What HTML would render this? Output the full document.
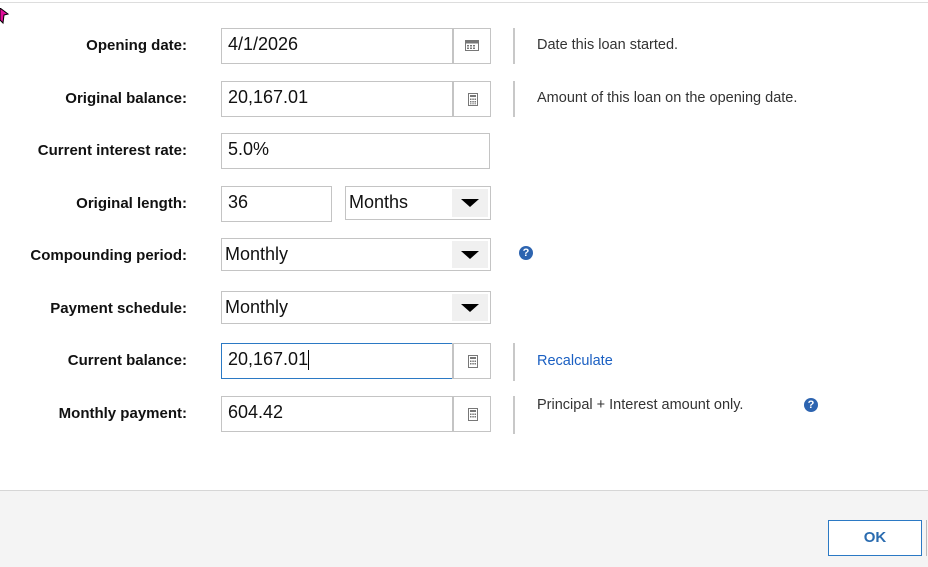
<!DOCTYPE html>
<html><head><style>
body{margin:0;width:928px;height:566px;position:relative;background:#fff;font-family:"Segoe UI","Liberation Sans",sans-serif;overflow:hidden}
.a{position:absolute}
.lbl{position:absolute;right:741px;font-weight:bold;font-size:15px;color:#111;white-space:nowrap}
.in{position:absolute;border:1px solid #c4c4c4;box-sizing:border-box;font-size:18px;color:#111;padding-left:6px;line-height:30px}
.btn{position:absolute;border:1px solid #c4c4c4;border-left:2px solid #c4c4c4;box-sizing:border-box;background:#fff}
.sep{position:absolute;left:513px;width:2px;background:#c8c8c8}
.help{position:absolute;font-size:14.5px;color:#333}
.dd{position:absolute;top:2px;right:2px;bottom:2px;width:36px;background:#f0f0f0}
.dd:after{content:"";position:absolute;left:9px;top:10px;border-left:9px solid transparent;border-right:9px solid transparent;border-top:8px solid #000}
.q{position:absolute;width:14px;height:14px;border-radius:50%;background:#2d64b0;color:#fff;font-size:11px;font-weight:bold;text-align:center;line-height:14px}
</style></head><body>
<div class="a" style="left:0;top:2px;width:928px;height:1px;background:#ddd"></div>
<svg class="a" style="left:0;top:8px" width="10" height="18"><polygon points="0,0 8,6 4,7 3,15 0,12" fill="#e0109a" stroke="#000" stroke-width="1"/></svg>
<div class="lbl" style="top:37px">Opening date:</div>
<div class="lbl" style="top:90px">Original balance:</div>
<div class="lbl" style="top:142px">Current interest rate:</div>
<div class="lbl" style="top:195px">Original length:</div>
<div class="lbl" style="top:247px">Compounding period:</div>
<div class="lbl" style="top:300px">Payment schedule:</div>
<div class="lbl" style="top:352px">Current balance:</div>
<div class="lbl" style="top:405px">Monthly payment:</div>

<div class="in" style="left:221px;top:28px;width:232px;height:36px">4/1/2026</div>
<div class="btn" style="left:452px;top:28px;width:39px;height:36px"><svg style="position:absolute;left:11px;top:10px" width="14" height="12"><rect x="0.5" y="1.5" width="13" height="10" fill="none" stroke="#777"/><rect x="0.5" y="1.5" width="13" height="3" fill="#777"/><g fill="#777"><rect x="2" y="6" width="2" height="1.5"/><rect x="5" y="6" width="2" height="1.5"/><rect x="8" y="6" width="2" height="1.5"/><rect x="2" y="8.5" width="2" height="1.5"/><rect x="5" y="8.5" width="2" height="1.5"/><rect x="8" y="8.5" width="2" height="1.5"/></g></svg></div>
<div class="sep" style="top:28px;height:36px"></div>
<div class="help" style="left:537px;top:37px">Date this loan started.</div>

<div class="in" style="left:221px;top:81px;width:232px;height:36px">20,167.01</div>
<div class="btn" style="left:452px;top:81px;width:39px;height:36px"><svg style="position:absolute;left:14px;top:11px" width="10" height="13"><rect x="0.5" y="0.5" width="9" height="12" fill="none" stroke="#777"/><rect x="2" y="2" width="6" height="2" fill="#777"/><g fill="#777"><rect x="2" y="5.5" width="1.5" height="1.5"/><rect x="4.3" y="5.5" width="1.5" height="1.5"/><rect x="6.5" y="5.5" width="1.5" height="1.5"/><rect x="2" y="8" width="1.5" height="1.5"/><rect x="4.3" y="8" width="1.5" height="1.5"/><rect x="6.5" y="8" width="1.5" height="1.5"/><rect x="2" y="10.3" width="1.5" height="1"/><rect x="4.3" y="10.3" width="1.5" height="1"/><rect x="6.5" y="10.3" width="1.5" height="1"/></g></svg></div>
<div class="sep" style="top:81px;height:36px"></div>
<div class="help" style="left:537px;top:90px">Amount of this loan on the opening date.</div>

<div class="in" style="left:221px;top:133px;width:269px;height:36px">5.0%</div>

<div class="in" style="left:221px;top:186px;width:111px;height:36px">36</div>
<div class="in" style="left:345px;top:186px;width:146px;height:34px;padding-left:3px">Months<div class="dd"></div></div>

<div class="in" style="left:221px;top:238px;width:270px;height:33px;padding-left:3px">Monthly<div class="dd"></div></div>
<div class="q" style="left:519px;top:246px">?</div>

<div class="in" style="left:221px;top:291px;width:270px;height:33px;padding-left:3px">Monthly<div class="dd"></div></div>

<div class="in" style="left:221px;top:343px;width:232px;height:36px;border-color:#2b79c4">20,167.01<span style="display:inline-block;width:1px;height:20px;background:#000;vertical-align:middle"></span></div>
<div class="btn" style="left:452px;top:343px;width:39px;height:36px"><svg style="position:absolute;left:14px;top:11px" width="10" height="13"><rect x="0.5" y="0.5" width="9" height="12" fill="none" stroke="#777"/><rect x="2" y="2" width="6" height="2" fill="#777"/><g fill="#777"><rect x="2" y="5.5" width="1.5" height="1.5"/><rect x="4.3" y="5.5" width="1.5" height="1.5"/><rect x="6.5" y="5.5" width="1.5" height="1.5"/><rect x="2" y="8" width="1.5" height="1.5"/><rect x="4.3" y="8" width="1.5" height="1.5"/><rect x="6.5" y="8" width="1.5" height="1.5"/></g></svg></div>
<div class="sep" style="top:343px;height:38px"></div>
<div class="help" style="left:537px;top:353px;color:#1a5fc2">Recalculate</div>

<div class="in" style="left:221px;top:396px;width:232px;height:36px">604.42</div>
<div class="btn" style="left:452px;top:396px;width:39px;height:36px"><svg style="position:absolute;left:14px;top:11px" width="10" height="13"><rect x="0.5" y="0.5" width="9" height="12" fill="none" stroke="#777"/><rect x="2" y="2" width="6" height="2" fill="#777"/><g fill="#777"><rect x="2" y="5.5" width="1.5" height="1.5"/><rect x="4.3" y="5.5" width="1.5" height="1.5"/><rect x="6.5" y="5.5" width="1.5" height="1.5"/><rect x="2" y="8" width="1.5" height="1.5"/><rect x="4.3" y="8" width="1.5" height="1.5"/><rect x="6.5" y="8" width="1.5" height="1.5"/></g></svg></div>
<div class="sep" style="top:396px;height:38px"></div>
<div class="help" style="left:537px;top:397px">Principal + Interest amount only.</div>
<div class="q" style="left:804px;top:398px">?</div>

<div class="a" style="left:0;top:490px;width:928px;height:76px;background:#f4f4f4;border-top:1px solid #d6d6d6"></div>
<div class="a" style="left:828px;top:520px;width:94px;height:36px;box-sizing:border-box;border:1px solid #2b79c4;background:#fff;color:#2b6cb0;font-weight:bold;font-size:15px;text-align:center;line-height:34px">OK</div>
<div class="a" style="left:926px;top:520px;width:1px;height:36px;background:#bbb"></div>
</body></html>
